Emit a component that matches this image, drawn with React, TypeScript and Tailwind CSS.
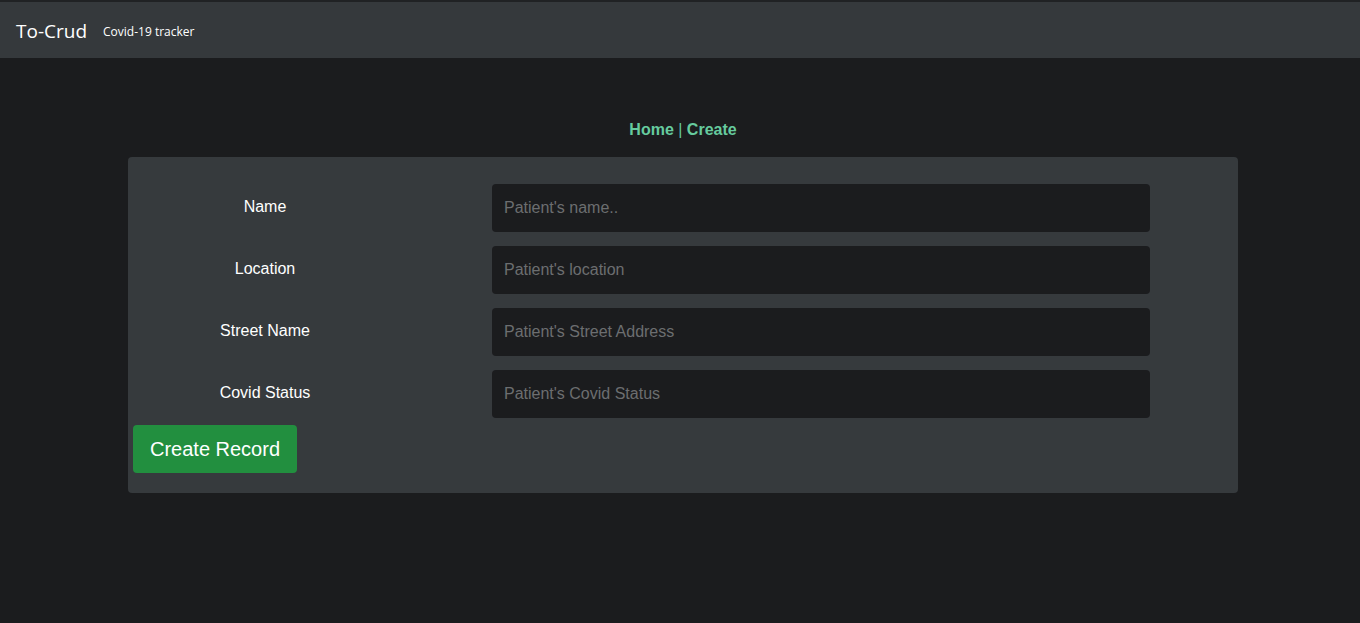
import React from "react";

const fields = [
  { label: "Name", ph: "Patient's name.." },
  { label: "Location", ph: "Patient's location" },
  { label: "Street Name", ph: "Patient's Street Address" },
  { label: "Covid Status", ph: "Patient's Covid Status" },
];

export default function App() {
  return (
    <div className="min-h-[623px] w-full bg-[#1b1c1e]" style={{ fontFamily: "'Liberation Sans', Arial, sans-serif" }}>
      <nav className="h-[58px] border-t-2 border-[#202224] bg-[#35393c] flex items-center px-4 pt-[3px]" style={{ fontFamily: "'Open Sans', 'Noto Sans', sans-serif" }}>
        <span className="text-[19px] text-white leading-none">To-Crud</span>
        <span className="ml-[16px] text-[12px] text-white leading-none pt-[1px]">Covid-19 tracker</span>
      </nav>
      <div className="pt-[63px] text-center text-[16px] font-bold text-[#66cb9e] leading-[18px] pl-[6px]">
        <span>Home</span>
        <span className="font-normal"> | </span>
        <span>Create</span>
      </div>
      <div className="ml-[128px] mt-[18px] w-[1110px] rounded-[4px] bg-[#363a3d] pt-[27px] pb-[20px]">
        <div className="flex flex-col gap-[14px]">
          {fields.map((f) => (
            <div key={f.label} className="flex items-center h-[48px]">
              <div className="w-[274px] text-center text-[16px] text-white pb-[2px]">{f.label}</div>
              <input
                placeholder={f.ph}
                className="ml-[90px] w-[658px] h-[48px] rounded-[4px] bg-[#1b1c1e] px-[12px] text-[16px] text-white placeholder:text-[#6c6e70] outline-none"
              />
            </div>
          ))}
        </div>
        <button className="ml-[5px] mt-[7px] w-[164px] h-[48px] rounded-[4px] bg-[#228f3f] text-[20px] text-white">
          Create Record
        </button>
      </div>
    </div>
  );
}
